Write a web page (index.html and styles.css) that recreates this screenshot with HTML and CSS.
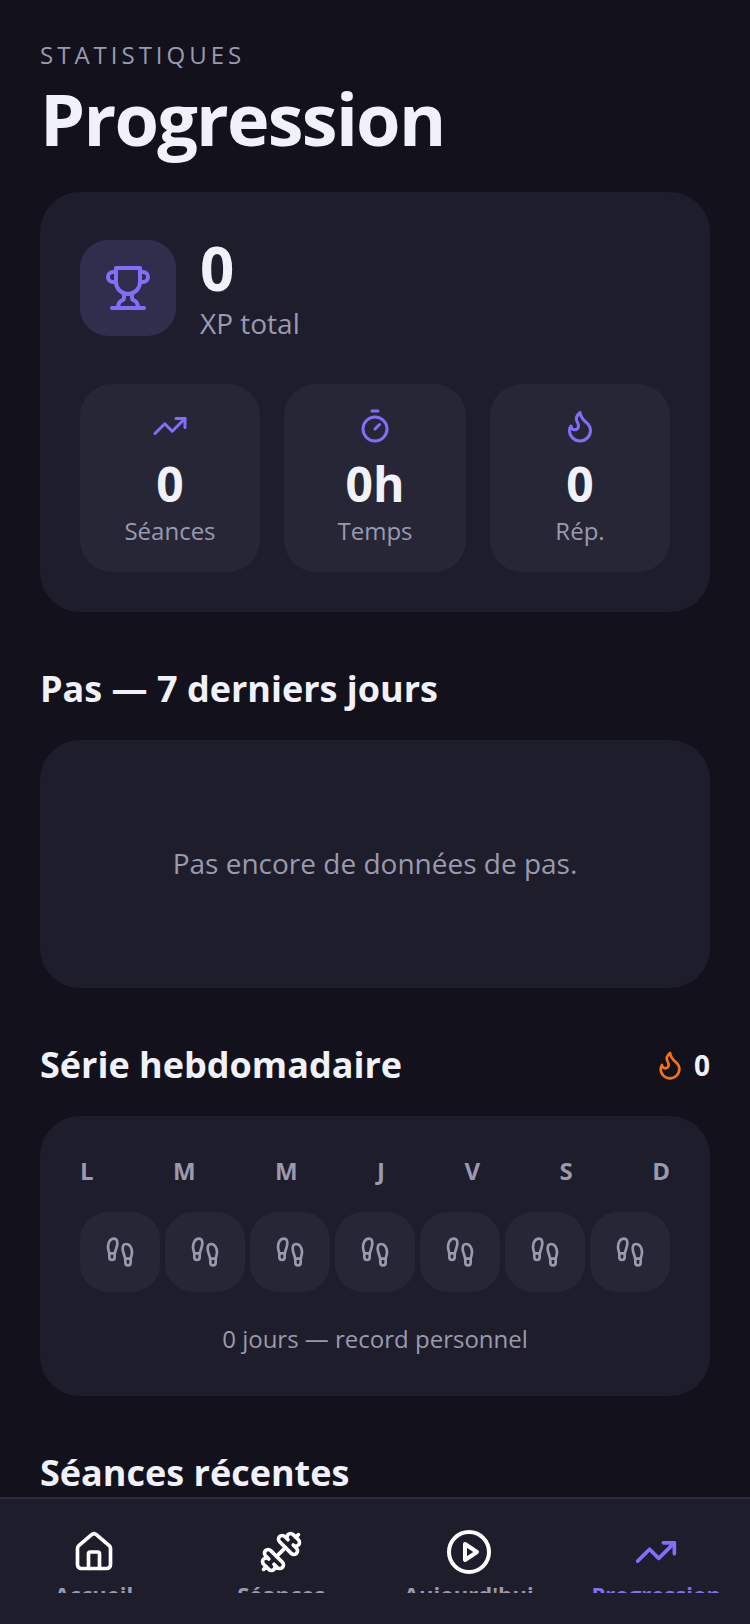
FILE: index.html
```html
<!DOCTYPE html>
<html lang="fr">
<head>
  <meta charset="UTF-8">
  <meta name="viewport" content="width=device-width, initial-scale=1.0">
  <title>Progression</title>
  <link rel="stylesheet" href="styles.css">
</head>
<body>
  <div class="screen">
    <main class="content">
      <div class="eyebrow">STATISTIQUES</div>
      <h1 class="title">Progression</h1>

      <section class="card summary">
        <div class="xp-row">
          <div class="xp-icon">
            <svg class="icon icon-48" viewBox="0 0 24 24"><path d="M6 9H4.5a2.5 2.5 0 0 1 0-5H6"/><path d="M18 9h1.5a2.5 2.5 0 0 0 0-5H18"/><path d="M4 22h16"/><path d="M10 14.66V17c0 .55-.47.98-.97 1.21C7.85 18.75 7 20.24 7 22"/><path d="M14 14.66V17c0 .55.47.98.97 1.21C16.15 18.75 17 20.24 17 22"/><path d="M18 2H6v7a6 6 0 0 0 12 0V2Z"/></svg>
          </div>
          <div class="xp-text">
            <div class="xp-value">0</div>
            <div class="xp-label">XP total</div>
          </div>
        </div>
        <div class="stats">
          <div class="stat">
            <svg class="icon icon-36" viewBox="0 0 24 24"><polyline points="22 7 13.5 15.5 8.5 10.5 2 17"/><polyline points="16 7 22 7 22 13"/></svg>
            <div class="stat-value">0</div>
            <div class="stat-label">Séances</div>
          </div>
          <div class="stat">
            <svg class="icon icon-36" viewBox="0 0 24 24"><line x1="10" x2="14" y1="2" y2="2"/><line x1="12" x2="15" y1="14" y2="11"/><circle cx="12" cy="14" r="8"/></svg>
            <div class="stat-value">0h</div>
            <div class="stat-label">Temps</div>
          </div>
          <div class="stat">
            <svg class="icon icon-36" viewBox="0 0 24 24"><path d="M8.5 14.5A2.5 2.5 0 0 0 11 12c0-1.38-.5-2-1-3-1.072-2.143-.224-4.054 2-6 .5 2.5 2 4.9 4 6.5 2 1.6 3 3.5 3 5.5a7 7 0 1 1-14 0c0-1.153.433-2.294 1-3a2.5 2.5 0 0 0 2.5 2.5z"/></svg>
            <div class="stat-value">0</div>
            <div class="stat-label">Rép.</div>
          </div>
        </div>
      </section>

      <h2 class="section-title">Pas — 7 derniers jours</h2>
      <section class="card empty">Pas encore de données de pas.</section>

      <div class="section-row">
        <h2 class="section-title">Série hebdomadaire</h2>
        <div class="streak">
          <svg class="icon icon-32 orange" viewBox="0 0 24 24"><path d="M8.5 14.5A2.5 2.5 0 0 0 11 12c0-1.38-.5-2-1-3-1.072-2.143-.224-4.054 2-6 .5 2.5 2 4.9 4 6.5 2 1.6 3 3.5 3 5.5a7 7 0 1 1-14 0c0-1.153.433-2.294 1-3a2.5 2.5 0 0 0 2.5 2.5z"/></svg>
          <span>0</span>
        </div>
      </div>
      <section class="card week">
        <div class="days">
          <span>L</span><span>M</span><span>M</span><span>J</span><span>V</span><span>S</span><span>D</span>
        </div>
        <div class="day-cells">
          <div class="day-cell"><svg class="icon icon-32 grey" viewBox="0 0 24 24"><use href="#feet"/></svg></div>
          <div class="day-cell"><svg class="icon icon-32 grey" viewBox="0 0 24 24"><use href="#feet"/></svg></div>
          <div class="day-cell"><svg class="icon icon-32 grey" viewBox="0 0 24 24"><use href="#feet"/></svg></div>
          <div class="day-cell"><svg class="icon icon-32 grey" viewBox="0 0 24 24"><use href="#feet"/></svg></div>
          <div class="day-cell"><svg class="icon icon-32 grey" viewBox="0 0 24 24"><use href="#feet"/></svg></div>
          <div class="day-cell"><svg class="icon icon-32 grey" viewBox="0 0 24 24"><use href="#feet"/></svg></div>
          <div class="day-cell"><svg class="icon icon-32 grey" viewBox="0 0 24 24"><use href="#feet"/></svg></div>
        </div>
        <div class="week-note">0 jours — record personnel</div>
      </section>

      <h2 class="section-title">Séances récentes</h2>
    </main>

    <nav class="tabbar">
      <div class="tab">
        <svg class="icon icon-44 white" viewBox="0 0 24 24"><path d="M15 21v-8a1 1 0 0 0-1-1h-4a1 1 0 0 0-1 1v8"/><path d="M3 10a2 2 0 0 1 .709-1.528l7-5.999a2 2 0 0 1 2.582 0l7 5.999A2 2 0 0 1 21 10v9a2 2 0 0 1-2 2H5a2 2 0 0 1-2-2z"/></svg>
        <div class="tab-label"><span>Accueil</span></div>
      </div>
      <div class="tab">
        <svg class="icon icon-44 white flip" viewBox="0 0 24 24"><path d="M14.4 14.4 9.6 9.6"/><path d="M18.657 21.485a2 2 0 1 1-2.829-2.828l-1.767 1.768a2 2 0 1 1-2.829-2.829l6.364-6.364a2 2 0 1 1 2.829 2.829l-1.768 1.767a2 2 0 1 1 2.828 2.829z"/><path d="m21.5 21.5-1.4-1.4"/><path d="M3.9 3.9 2.5 2.5"/><path d="M6.404 12.768a2 2 0 1 1-2.829-2.829l1.768-1.767a2 2 0 1 1-2.828-2.829l2.828-2.828a2 2 0 1 1 2.829 2.828l1.767-1.768a2 2 0 1 1 2.829 2.829z"/></svg>
        <div class="tab-label"><span>Séances</span></div>
      </div>
      <div class="tab">
        <svg class="icon icon-48 white" viewBox="0 0 24 24"><circle cx="12" cy="12" r="10"/><polygon points="10 8 16 12 10 16 10 8"/></svg>
        <div class="tab-label"><span>Aujourd'hui</span></div>
      </div>
      <div class="tab active">
        <svg class="icon icon-44" viewBox="0 0 24 24"><polyline points="22 7 13.5 15.5 8.5 10.5 2 17"/><polyline points="16 7 22 7 22 13"/></svg>
        <div class="tab-label"><span>Progression</span></div>
      </div>
    </nav>
  </div>

  <svg class="defs" width="0" height="0">
    <symbol id="feet" viewBox="0 0 24 24">
      <path d="M4 16v-2.38C4 11.5 2.97 10.5 3 8c.03-2.72 1.49-6 4.5-6C9.37 2 10 3.8 10 5.5c0 3.11-2 5.66-2 8.68V16a2 2 0 1 1-4 0Z"/>
      <path d="M20 20v-2.38c0-2.12 1.03-3.12 1-5.62-.03-2.72-1.49-6-4.5-6C14.63 6 14 7.8 14 9.5c0 3.11 2 5.66 2 8.68V20a2 2 0 1 0 4 0Z"/>
      <path d="M16 17h4"/>
      <path d="M4 13h4"/>
    </symbol>
  </svg>
</body>
</html>
```

FILE: styles.css
```css
* {
  box-sizing: border-box;
  margin: 0;
  padding: 0;
}
:root {
  --bg: #13121c;
  --card: #1e1d2c;
  --inner: #272637;
  --fg: #f1f1fa;
  --muted: #9a9aae;
  --primary: #7f70f7;
}
body {
  background-color: var(--bg);
  color: var(--fg);
  font-family: "Open Sans", sans-serif;
}
.screen {
  display: flex;
  flex-direction: column;
  width: 750px;
  height: 1624px;
  overflow: hidden;
}
.content {
  flex: 1;
  min-height: 0;
  overflow: hidden;
  padding: 39px 40px 0;
}
.eyebrow {
  color: var(--muted);
  font-size: 24px;
  line-height: 32px;
  letter-spacing: 4px;
}
.title {
  font-size: 72px;
  font-weight: 700;
  line-height: 88px;
  letter-spacing: -1.76px;
  margin-top: 3px;
  margin-bottom: 30px;
}
.card {
  background-color: var(--card);
  border-radius: 40px;
}
.summary {
  padding: 48px 40px 40px;
  margin-bottom: 53px;
}
.xp-row {
  display: flex;
  gap: 24px;
  margin-bottom: 44px;
}
.xp-icon {
  display: flex;
  align-items: center;
  justify-content: center;
  width: 96px;
  height: 96px;
  border-radius: 28px;
  background-color: #312d4d;
}
.xp-value {
  font-size: 60px;
  font-weight: 700;
  line-height: 60px;
  margin-top: -2px;
}
.xp-label {
  color: var(--muted);
  font-size: 28px;
  line-height: 40px;
  margin-top: 5px;
  margin-bottom: -3px;
}
.icon {
  display: block;
  fill: none;
  stroke: var(--primary);
  stroke-width: 2;
  stroke-linecap: round;
  stroke-linejoin: round;
  flex-shrink: 0;
}
.icon-48 {
  width: 48px;
  height: 48px;
}
.icon-44 {
  width: 44px;
  height: 44px;
  margin: 2px 0;
}
.icon-36 {
  width: 36px;
  height: 36px;
}
.icon-32 {
  width: 32px;
  height: 32px;
}
.orange {
  stroke: #f97316;
}
.grey {
  stroke: var(--muted);
}
.white {
  stroke: #fff;
}
.flip {
  transform: scaleX(-1);
}
.stats {
  display: grid;
  grid-template-columns: 1fr 182px 1fr;
  gap: 24px;
}
.stat {
  display: flex;
  flex-direction: column;
  align-items: center;
  height: 188px;
  padding-top: 24px;
  border-radius: 32px;
  background-color: var(--inner);
}
.stat-value {
  font-size: 48px;
  font-weight: 700;
  line-height: 64px;
  margin-top: 8px;
}
.stat-label {
  color: var(--muted);
  font-size: 24px;
  line-height: 32px;
  margin-top: -1px;
}
.section-title {
  font-size: 36px;
  font-weight: 700;
  line-height: 48px;
}
.summary + .section-title {
  margin-bottom: 27px;
}
.empty {
  display: flex;
  align-items: center;
  justify-content: center;
  height: 248px;
  padding-bottom: 2px;
  color: var(--muted);
  font-size: 28px;
  margin-bottom: 53px;
}
.section-row {
  display: flex;
  align-items: center;
  justify-content: space-between;
  margin-bottom: 27px;
}
.streak {
  display: flex;
  align-items: center;
  gap: 8px;
  font-size: 28px;
  font-weight: 700;
}
.week {
  height: 280px;
  padding: 39px 40px 40px;
  margin-bottom: 53px;
}
.days {
  display: flex;
  justify-content: space-between;
  color: var(--muted);
  font-size: 24px;
  font-weight: 700;
  line-height: 32px;
  margin-bottom: 25px;
}
.day-cells {
  display: flex;
  justify-content: space-between;
}
.day-cell {
  display: flex;
  align-items: center;
  justify-content: center;
  width: 80px;
  height: 80px;
  border-radius: 28px;
  background-color: var(--inner);
}
.week-note {
  color: var(--muted);
  font-size: 24px;
  line-height: 32px;
  text-align: center;
  margin-top: 31px;
}
.tabbar {
  display: flex;
  height: 127px;
  flex-shrink: 0;
  padding-top: 29px;
  border-top: 2px solid #2e2d40;
  background-color: var(--card);
}
.tab {
  flex: 1;
  display: flex;
  flex-direction: column;
  align-items: center;
  gap: 3px;
}
.tab-label {
  height: 14px;
  overflow: hidden;
  color: var(--muted);
  font-size: 22px;
  font-weight: 700;
  line-height: 30px;
  white-space: nowrap;
}
.active .tab-label {
  color: var(--primary);
}
.defs {
  position: absolute;
}
```
